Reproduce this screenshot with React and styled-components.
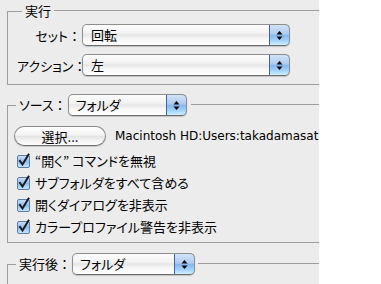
import React from 'react';
import styled, { createGlobalStyle } from 'styled-components';

const GlobalStyle = createGlobalStyle`
  html, body {
    margin: 0;
    padding: 0;
    background: #fff;
  }
`;

const Panel = styled.div`
  width: 319px;
  height: 284px;
  overflow: hidden;
  box-sizing: border-box;
  padding-left: 7px;
  background: #ececec;
  color: #000;
  font-family: "Noto Sans CJK JP", sans-serif;
  font-feature-settings: "palt";
  font-size: 12px;
`;

const Group = styled.section`
  margin-top: ${p => p.$top || 0}px;
`;

const Header = styled.div`
  display: flex;
  align-items: center;
  height: 22px;

  &::before {
    content: '';
    align-self: flex-end;
    width: ${p => p.$corner}px;
    height: 11px;
    border-top: 1px solid #9d9d9d;
    border-left: 1px solid #9d9d9d;
    box-sizing: border-box;
  }

  &::after {
    content: '';
    flex: 1;
    align-self: flex-end;
    height: 11px;
    margin-left: ${p => p.$after}px;
    border-top: 1px solid #9d9d9d;
  }
`;

const Title = styled.span`
  padding: 0 ${p => p.$right ?? 3}px 0 3px;
  font-size: 13px;
  line-height: 22px;
  white-space: nowrap;
`;

const Colon = styled.span`
  font-feature-settings: normal;
`;

const Body = styled.div`
  display: flex;
  flex-direction: column;
  gap: ${p => p.$gap || 0}px;
  height: ${p => (p.$height ? `${p.$height}px` : 'auto')};
  padding: ${p => p.$pad};
  border-left: 1px solid #9d9d9d;
  border-bottom: ${p => (p.$open ? 'none' : '1px solid #9d9d9d')};
  box-sizing: border-box;
`;

const FormRow = styled.div`
  display: grid;
  grid-template-columns: 64px ${p => p.$width}px;
  column-gap: 1px;
  align-items: center;
`;

const Label = styled.span`
  text-align: right;
  font-size: 13px;
  white-space: nowrap;
`;

const Select = styled.div`
  display: flex;
  width: ${p => p.$width}px;
  height: 22px;
  box-sizing: border-box;
  border: 1px solid #8e8e8e;
  border-bottom-color: #6c6c6c;
  border-radius: 5px;
  background: linear-gradient(#fcfcfc 0%, #f2f2f2 40%, #e6e6e6 50%, #f7f7f7 70%, #ffffff 100%);
  box-shadow: 0 1px 1px rgba(0, 0, 0, 0.18);
  overflow: hidden;
`;

const SelectValue = styled.span`
  flex: 1;
  padding-left: ${p => p.$indent || 8}px;
  font-size: 13px;
  line-height: 20px;
  white-space: nowrap;
`;

const Stepper = styled.span`
  display: flex;
  align-items: center;
  justify-content: center;
  width: 19px;
  margin: -1px -1px -1px 0;
  border: 1px solid #3f63a8;
  border-radius: 0 5px 5px 0;
  background: linear-gradient(#d3e3f6 0%, #aecbef 45%, #86b8ee 52%, #a6d5fb 80%, #d0f1ff 100%);
`;

const Button = styled.button`
  width: 92px;
  height: 20px;
  padding: 0;
  border: 1px solid #8a8a8a;
  border-bottom-color: #6f6f6f;
  border-radius: 10px;
  background: linear-gradient(#ffffff 0%, #f3f3f3 45%, #e4e4e4 52%, #f6f6f6 80%, #ffffff 100%);
  box-shadow: 0 1px 1px rgba(0, 0, 0, 0.15);
  font-family: "Noto Sans CJK JP", sans-serif;
  font-size: 13px;
  color: #000;
`;

const ButtonRow = styled.div`
  display: flex;
  align-items: center;
  gap: 9px;
  height: 20px;
`;

const Path = styled.span`
  font-family: "DejaVu Sans", sans-serif;
  font-size: 12px;
  white-space: nowrap;
`;

const Checks = styled.div`
  display: flex;
  flex-direction: column;
  padding-left: 2px;
`;

const Check = styled.label`
  display: flex;
  align-items: center;
  gap: 4px;
  height: 22px;
  font-size: 13px;
  white-space: nowrap;
`;

function Arrows() {
  return (
    <svg width="7" height="11" viewBox="0 0 7 11">
      <path d="M3.5 1 L6.5 4.5 L0.5 4.5 Z" fill="#000" />
      <path d="M3.5 10 L6.5 6.5 L0.5 6.5 Z" fill="#000" />
    </svg>
  );
}

function PopUp({ width, value, indent }) {
  return (
    <Select $width={width}>
      <SelectValue $indent={indent}>{value}</SelectValue>
      <Stepper>
        <Arrows />
      </Stepper>
    </Select>
  );
}

function CheckBox() {
  return (
    <svg width="15" height="15" viewBox="0 0 15 15">
      <defs>
        <linearGradient id="cb" x1="0" y1="0" x2="0" y2="1">
          <stop offset="0" stopColor="#cfe2f7" />
          <stop offset="0.5" stopColor="#8dbcee" />
          <stop offset="1" stopColor="#c5ecff" />
        </linearGradient>
      </defs>
      <rect x="1.5" y="2.5" width="12" height="12" rx="1.5" fill="url(#cb)" stroke="#5e7da6" />
      <path d="M4 8 L6.5 11.5 L12.5 1.5" fill="none" stroke="#1a1a1a" strokeWidth="2" strokeLinecap="square" />
    </svg>
  );
}

const options = [
  '“開く” コマンドを無視',
  'サブフォルダをすべて含める',
  '開くダイアログを非表示',
  'カラープロファイル警告を非表示',
];

export default function App() {
  return (
    <>
      <GlobalStyle />
      <Panel>
        <Group>
          <Header $corner={15} $after={0}>
            <Title>実行</Title>
          </Header>
          <Body $pad="2px 0 8px 9px" $gap={8}>
            <FormRow $width={208}>
              <Label>セット<Colon>：</Colon></Label>
              <PopUp width={208} value="回転" />
            </FormRow>
            <FormRow $width={208}>
              <Label>アクション<Colon>：</Colon></Label>
              <PopUp width={208} value="左" />
            </FormRow>
          </Body>
        </Group>

        <Group $top={9}>
          <Header $corner={9} $after={4}>
            <Title $right={1}>ソース<Colon>：</Colon></Title>
            <PopUp width={119} value="フォルダ" indent={7} />
          </Header>
          <Body $pad="10px 0 5px 6px" $gap={3}>
            <ButtonRow>
              <Button>選択...</Button>
              <Path>Macintosh HD:Users:takadamasat</Path>
            </ButtonRow>
            <Checks>
              {options.map(text => (
                <Check key={text}>
                  <CheckBox />
                  {text}
                </Check>
              ))}
            </Checks>
          </Body>
        </Group>

        <Group $top={10}>
          <Header $corner={9} $after={3}>
            <Title $right={1}>実行後<Colon>：</Colon></Title>
            <PopUp width={123} value="フォルダ" indent={7} />
          </Header>
          <Body $pad="0" $height={20} $open />
        </Group>
      </Panel>
    </>
  );
}
